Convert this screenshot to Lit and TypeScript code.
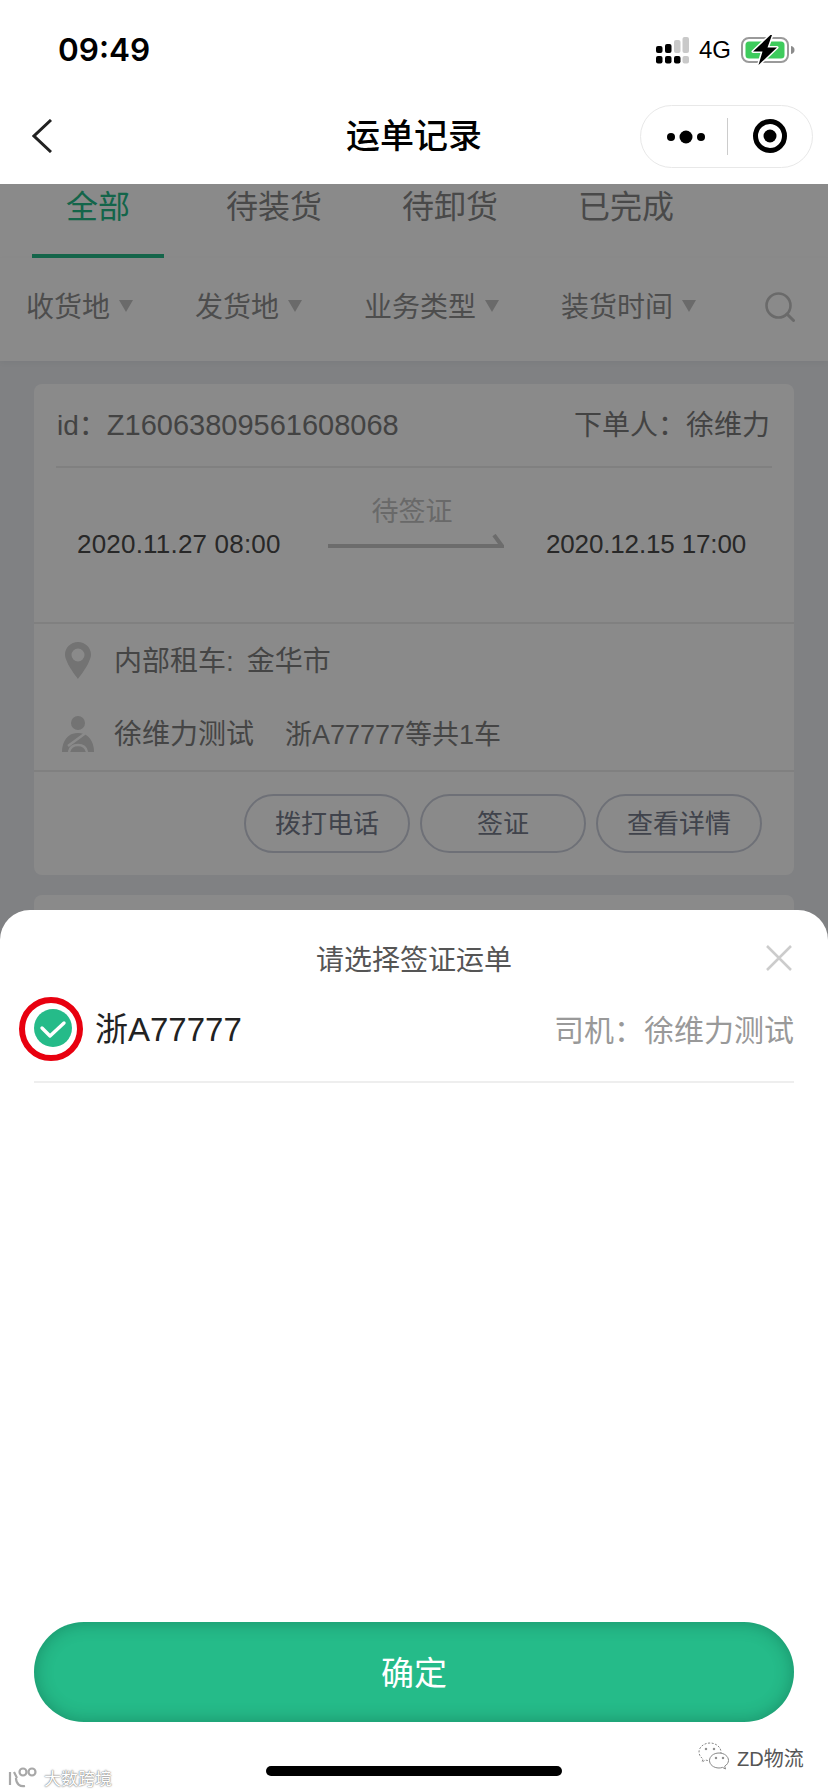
import { LitElement, html, css } from "lit";
import { customElement } from "lit/decorators.js";

const TABS = ["全部", "待装货", "待卸货", "已完成"];
const FILTERS = ["收货地", "发货地", "业务类型", "装货时间"];
const ACTIONS = ["拨打电话", "签证", "查看详情"];

@customElement("app-root")
export class AppRoot extends LitElement {
  static styles = css`
    :host {
      display: block;
      position: relative;
      width: 828px;
      height: 1792px;
      overflow: hidden;
      background: #eceef2;
      font-family: "Liberation Sans", "Noto Sans CJK SC", sans-serif;
      color: #777;
    }
    svg { display: block; flex: none; }
    .top { background: #fff; position: relative; z-index: 3; }
    .status {
      height: 88px;
      box-sizing: border-box;
      padding: 30px 33px 0 58px;
      display: flex;
      align-items: flex-start;
      justify-content: space-between;
    }
    .time {
      font-family: Inter, "Liberation Sans", sans-serif;
      font-weight: 600;
      font-size: 31.5px;
      line-height: 40px;
      color: #000;
    }
    .sys { display: flex; align-items: center; height: 40px; }
    .net { font-size: 24px; color: #000; margin: 0 10px; line-height: 40px; }
    .nav {
      height: 96px;
      display: grid;
      grid-template-columns: 1fr auto 1fr;
      align-items: center;
      padding: 0 15px;
    }
    .back { margin-left: 17px; }
    .title { font-size: 34px; font-weight: 500; color: #000; line-height: 48px; }
    .capsule {
      justify-self: end;
      width: 173px;
      height: 63px;
      box-sizing: border-box;
      border: 1px solid #e8e8e8;
      border-radius: 32px;
      display: flex;
      align-items: center;
    }
    .tabs { display: flex; gap: 44px; padding-left: 32px; background: #fff; height: 74px; }
    .tab { width: 132px; display: flex; flex-direction: column; align-items: center; font-size: 32px; line-height: 44px; color: #888; }
    .tab span { padding-top: 1px; }
    .tab.on { color: #25bb89; }
    .tab i { margin-top: auto; width: 100%; height: 4px; background: transparent; }
    .tab.on i { background: #25bb89; }
    .filters {
      height: 94px;
      padding: 0 33px 9px 26px;
      background: #fff;
      display: flex;
      align-items: center;
      gap: 62px;
      box-shadow: 0 2px 6px rgba(0,0,0,.04);
      font-size: 28px;
      color: #8f8f8f;
    }
    .filter { display: flex; align-items: center; gap: 9px; }
    .tri { width: 0; height: 0; border-left: 7.5px solid transparent; border-right: 7.5px solid transparent; border-top: 12px solid #c4c4c4; margin-top: 2px; }
    .search { margin-left: auto; margin-top: 4px; }
    .list { padding: 23px 34px 0; display: flex; flex-direction: column; gap: 20px; }
    .card { background: #fff; border-radius: 8px; height: 491px; }
    .head {
      height: 84px;
      box-sizing: border-box;
      margin: 0 22px;
      border-bottom: 2px solid #ededed;
      display: flex;
      align-items: center;
      justify-content: space-between;
      padding: 0 2px 4px 1px;
      font-size: 28px;
      color: #7d7d7d;
    }
    .code { font-size: 29px; }
    .route {
      height: 156px;
      box-sizing: border-box;
      border-bottom: 2px solid #ededed;
      padding: 26px 0 0 43px;
      display: flex;
      align-items: flex-start;
    }
    .date { font-size: 26px; line-height: 36px; margin-top: 32px; width: 204px; color: #4a4a4a; white-space: nowrap; }
    .date.from { letter-spacing: .2px; }
    .date.to { letter-spacing: -.15px; }
    .mid { width: 176px; margin: 0 42px 0 47px; display: flex; flex-direction: column; }
    .state { font-size: 27px; line-height: 36px; text-align: center; color: #c2c2c2; padding-right: 8px; }
    .arrow { margin-top: 4px; }
    .rows { height: 148px; box-sizing: border-box; border-bottom: 2px solid #ededed; }
    .row { height: 73px; box-sizing: border-box; display: flex; align-items: center; padding-left: 24px; gap: 16px; font-size: 28px; color: #808080; }
    .row-text { margin-top: -4px; }
    .ico { width: 40px; display: flex; justify-content: center; }
    .city { margin-left: 13px; }
    .plate { margin-left: 31px; font-size: 27px; }
    .acts { display: flex; justify-content: flex-end; gap: 10px; padding: 22px 32px 0 0; }
    .act {
      width: 166px;
      height: 59px;
      box-sizing: border-box;
      border: 2px solid #ccd0dc;
      border-radius: 30px;
      padding-bottom: 4px;
      display: flex;
      align-items: center;
      justify-content: center;
      font-size: 26px;
      color: #767c8c;
    }
    .scrim {
      position: absolute;
      inset: 184px 0 0 0;
      background: rgba(0,0,0,.46);
      z-index: 2;
      display: flex;
      flex-direction: column;
      justify-content: flex-end;
    }
    .sheet {
      height: 882px;
      box-sizing: border-box;
      background: #fff;
      border-radius: 30px 30px 0 0;
      padding: 30px 34px 70px;
      display: flex;
      flex-direction: column;
    }
    .sheet-title {
      display: grid;
      grid-template-columns: 1fr auto 1fr;
      align-items: center;
      height: 40px;
      font-size: 28px;
      color: #555;
    }
    .sheet-title span { margin-top: -4px; }
    .close { justify-self: end; margin: -5px 2px 0 0; }
    .pick { height: 96px; margin-bottom: 5px; display: flex; align-items: center; }
    .check { position: relative; width: 38px; height: 38px; }
    .ring {
      position: absolute;
      left: -15px;
      top: -12px;
      width: 64px;
      height: 64px;
      box-sizing: border-box;
      border: 6px solid #e8000f;
      border-radius: 50%;
    }
    .no { margin-left: 23px; font-size: 33px; color: #222; margin-top: -2px; }
    .driver { margin-left: auto; font-size: 30px; color: #999; }
    .rule { height: 2px; background: #eee; }
    .ok {
      margin-top: auto;
      height: 100px;
      box-sizing: border-box;
      padding-bottom: 2px;
      border-radius: 50px;
      background: #25bb89;
      box-shadow: inset 0 0 18px rgba(0,50,35,.32);
      display: flex;
      align-items: center;
      justify-content: center;
      color: #fff;
      font-size: 33px;
    }
    .home { position: absolute; left: 266px; top: 1766px; width: 296px; height: 10px; border-radius: 5px; background: #000; z-index: 4; }
    .mark { position: absolute; z-index: 4; display: flex; align-items: center; }
    .mark-a { left: 8px; top: 1765px; gap: 5px; font-size: 17px; color: #fff; text-shadow: 0 0 2px #777, 0 0 1px #777; }
    .mark-b { left: 698px; top: 1742px; gap: 5px; font-size: 20px; color: #555; text-shadow: 0 0 1px #fff; }
  `;

  private signal() {
    return html`<svg width="33" height="27" viewBox="0 0 33 27">
      <g fill="#000">
        <rect x="0" y="9" width="6.5" height="7" rx="2"/><rect x="0" y="19" width="6.5" height="7.5" rx="2"/>
        <rect x="9" y="7" width="6.5" height="9" rx="2"/><rect x="9" y="19" width="6.5" height="7.5" rx="2"/>
        <rect x="18" y="19" width="6.5" height="7.5" rx="2"/>
      </g>
      <g fill="#c9c9c9">
        <rect x="18" y="3" width="6.5" height="13" rx="2"/>
        <rect x="26.5" y="0" width="6.5" height="16" rx="2"/><rect x="26.5" y="19" width="6.5" height="7.500" rx="2"/>
      </g>
    </svg>`;
  }

  private battery() {
    return html`<svg width="54" height="30" viewBox="0 0 54 30">
      <rect x="1" y="3" width="46" height="24" rx="7" fill="none" stroke="#9a9a9a" stroke-width="2"/>
      <rect x="4.5" y="6.5" width="39" height="17" rx="3.5" fill="#3ecb5c"/>
      <path d="M50 11c2.500 .6 3.500 2 3.500 4s-1 3.400-3.500 4z" fill="#8c8c8c"/>
      <path d="M29.500 0 12 16.500h9.500L17.500 30 36 12.500h-9.500L31 0z" fill="#000" stroke="#fff" stroke-width="3" stroke-linejoin="round" paint-order="stroke"/>
    </svg>`;
  }

  private back() {
    return html`<svg class="back" width="20" height="34" viewBox="0 0 20 34"><path d="M19 1 2 17l17 16" fill="none" stroke="#222" stroke-width="3"/></svg>`;
  }

  private capsule() {
    return html`<div class="capsule">
      <svg width="86" height="37" viewBox="0 0 86 37">
        <g fill="#000"><circle cx="30" cy="19" r="4"/><circle cx="45" cy="19" r="6.5"/><circle cx="60" cy="19" r="4"/></g>
      </svg>
      <svg width="1" height="37" viewBox="0 0 1 37"><rect width="1" height="37" fill="#ccc"/></svg>
      <svg width="85" height="37" viewBox="0 0 85 37">
        <circle cx="42" cy="18" r="14.5" fill="none" stroke="#000" stroke-width="5"/><circle cx="42" cy="18" r="6.5" fill="#000"/>
      </svg>
    </div>`;
  }

  private searchIcon() {
    return html`<svg class="search" width="30" height="30" viewBox="0 0 30 30"><circle cx="13.500" cy="13.500" r="12" fill="none" stroke="#c4c4c4" stroke-width="2.600"/><path d="M22 22l6.500 6.500" stroke="#c4c4c4" stroke-width="3" stroke-linecap="round"/></svg>`;
  }

  private pin() {
    return html`<svg width="26" height="37" viewBox="0 0 26 37"><path fill-rule="evenodd" d="M13 0C5.800 0 0 5.600 0 12.600 0 21 13 37 13 37s13-16 13-24.400C26 5.600 20.200 0 13 0zm0 6.500a6.500 6.500 0 1 1 0 13 6.500 6.500 0 0 1 0-13z" fill="#d4d4d4"/></svg>`;
  }

  private person() {
    return html`<svg width="32" height="36" viewBox="0 0 32 36">
      <circle cx="16" cy="7" r="7" fill="#d4d4d4"/>
      <path d="M0 36c0-4 .6-7 2-10 2.500-5 6-9 14-9s11.500 4 14 9c1.400 3 2 6 2 10z" fill="#d4d4d4"/>
      <path d="M6 30 23 17.500" stroke="#fff" stroke-width="2.500"/>
      <path d="M7 36c1-5 4.500-7 9-7s8 2 9 7" fill="none" stroke="#fff" stroke-width="2.500"/>
    </svg>`;
  }

  private wechat() {
    return html`<svg width="34" height="30" viewBox="0 0 34 30" fill="#fff" stroke="#888" stroke-width="1">
      <path d="M12 1C6 1 1 5 1 10c0 3 1.500 5 4 7l-1 3 3.500-2c1.500 .5 3 .7 4.500 .7 6 0 11-4 11-8.700S18 1 12 1z" stroke-dasharray="2 1.500"/>
      <path d="M21 11c-5.500 0-9.500 3.500-9.500 7.500S15.500 26 21 26c1.200 0 2.400-.2 3.500-.6l3 1.600-.8-2.800c2.300-1.400 3.800-3.600 3.800-5.700C30.500 14.500 26.500 11 21 11z"/>
      <circle cx="8" cy="7" r=".8" fill="#555"/><circle cx="16" cy="7" r=".8" fill="#555"/><circle cx="18" cy="16" r=".8" fill="#555"/><circle cx="25" cy="16" r=".8" fill="#555"/>
    </svg>`;
  }

  private brand() {
    return html`<svg width="31" height="22" viewBox="0 0 31 22" fill="none" stroke="#a8a8a8" stroke-width="2.200">
      <path d="M2 5v13M6 5l3 6M8 11c0 6 4 9 9 8"/><circle cx="15" cy="5" r="3.500"/><circle cx="24" cy="5" r="3.500"/>
    </svg>`;
  }

  render() {
    return html`
      <div class="top">
        <div class="status">
          <div class="time">09:49</div>
          <div class="sys">${this.signal()}<span class="net">4G</span>${this.battery()}</div>
        </div>
        <div class="nav">
          ${this.back()}
          <div class="title">运单记录</div>
          ${this.capsule()}
        </div>
      </div>
      <div class="tabs">
        ${TABS.map((t, i) => html`<div class="tab ${i === 0 ? "on" : ""}"><span>${t}</span><i></i></div>`)}
      </div>
      <div class="filters">
        ${FILTERS.map((f) => html`<div class="filter"><span>${f}</span><span class="tri"></span></div>`)}
        ${this.searchIcon()}
      </div>
      <div class="list">
        <div class="card">
          <div class="head">
            <span>id&#xFF1A;<span class="code">Z16063809561608068</span></span>
            <span>下单人&#xFF1A;徐维力</span>
          </div>
          <div class="route">
            <div class="date from">2020.11.27 08:00</div>
            <div class="mid">
              <div class="state">待签证</div>
              <svg class="arrow" width="176" height="14" viewBox="0 0 176 14"><path d="M0 12h174l-8-11" fill="none" stroke="#c8c8c8" stroke-width="4"/></svg>
            </div>
            <div class="date to">2020.12.15 17:00</div>
          </div>
          <div class="rows">
            <div class="row"><span class="ico">${this.pin()}</span><span class="row-text">内部租车:<span class="city">金华市</span></span></div>
            <div class="row"><span class="ico">${this.person()}</span><span class="row-text">徐维力测试<span class="plate">浙A77777等共1车</span></span></div>
          </div>
          <div class="acts">${ACTIONS.map((a) => html`<div class="act">${a}</div>`)}</div>
        </div>
        <div class="card"></div>
      </div>
      <div class="scrim">
        <div class="sheet">
          <div class="sheet-title">
            <span></span>
            <span>请选择签证运单</span>
            <svg class="close" width="26" height="26" viewBox="0 0 26 26"><path d="M1 1l24 24M25 1 1 25" stroke="#ccc" stroke-width="2.500"/></svg>
          </div>
          <div class="pick">
            <div class="check">
              <svg width="38" height="38" viewBox="0 0 38 38"><circle cx="19" cy="19" r="19" fill="#25bb89"/><path d="M8 19l8 8 14-13" fill="none" stroke="#fff" stroke-width="3.400" stroke-linecap="round" stroke-linejoin="round"/></svg>
              <div class="ring"></div>
            </div>
            <span class="no">浙A77777</span>
            <span class="driver">司机&#xFF1A;徐维力测试</span>
          </div>
          <div class="rule"></div>
          <div class="ok">确定</div>
        </div>
      </div>
      <div class="home"></div>
      <div class="mark mark-a">${this.brand()}<span>大数跨境</span></div>
      <div class="mark mark-b">${this.wechat()}<span>ZD物流</span></div>
    `;
  }
}
